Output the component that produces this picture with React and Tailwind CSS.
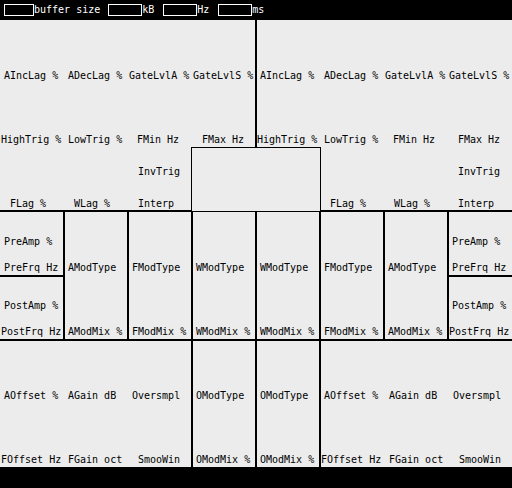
const MONO = "font-['DejaVu_Sans_Mono','Liberation_Mono',monospace] text-[10px]"

function Lbl({ children, className = '' }) {
  return <div className={`h-[11px] whitespace-pre leading-[11px] ${className}`}>{children}</div>
}

// a knob slot in the top grid: label sits at the bottom
function Knob({ label, pad, className = '' }) {
  return (
    <div className={`flex flex-col justify-end ${className}`}>
      <Lbl className={pad}>{label}</Lbl>
    </div>
  )
}

function Toggles({ className = '' }) {
  return (
    <div className={`flex flex-col justify-end border-b-2 border-black pb-[1px] ${className}`}>
      <Lbl className="mb-[21px] pl-[10px]">InvTrig</Lbl>
      <Lbl className="pl-[10px]">Interp</Lbl>
    </div>
  )
}

function ModCell({ type, mix, className = '' }) {
  return (
    <div className={`flex h-[128px] w-[64px] flex-col justify-end border-r border-b border-l border-black pb-[2px] ${className}`}>
      <Lbl className="mb-[53px] pl-[3px]">{type}</Lbl>
      <Lbl className="pl-[3px]">{mix}</Lbl>
    </div>
  )
}

function AmpStack({ side }) {
  const edge = side === 'left' ? 'border-r' : 'border-l'
  const last = side === 'left' ? 'pl-[1px]' : 'pl-0'
  const pad = side === 'left' ? 'pl-[4px]' : 'pl-[3px]'
  return (
    <div className="flex w-[64px] flex-col">
      <div className={`flex h-[64px] flex-col justify-end border-b border-black pb-[2px] ${edge}`}>
        <Lbl className={`mb-[15px] ${pad}`}>PreAmp %</Lbl>
        <Lbl className={pad}>PreFrq Hz</Lbl>
      </div>
      <div className={`flex h-[64px] flex-col justify-end border-t border-b border-black pb-[2px] ${edge}`}>
        <Lbl className={`mb-[15px] ${pad}`}>PostAmp %</Lbl>
        <Lbl className={last}>PostFrq Hz</Lbl>
      </div>
    </div>
  )
}

function OffsetGroup({ className = '', first = 'pl-[4px]', firstLow = 'pl-[1px]' }) {
  return (
    <div className={`flex h-[127px] w-[192px] border-t border-black ${className}`}>
      <div className="flex w-[64px] flex-col justify-end pb-[2px]">
        <Lbl className={`mb-[53px] ${first}`}>AOffset %</Lbl>
        <Lbl className={firstLow}>FOffset Hz</Lbl>
      </div>
      <div className="flex w-[64px] flex-col justify-end pb-[2px]">
        <Lbl className="mb-[53px] pl-[4px]">AGain dB</Lbl>
        <Lbl className="pl-[4px]">FGain oct</Lbl>
      </div>
      <div className="flex flex-1 flex-col justify-end pb-[2px]">
        <Lbl className="mb-[53px] pl-[4px]">Oversmpl</Lbl>
        <Lbl className="pl-[10px]">SmooWin</Lbl>
      </div>
    </div>
  )
}

function OModCell({ side }) {
  return (
    <div className="flex h-[127px] w-[64px] flex-col justify-end border-t border-r border-l border-black pb-[2px]">
      <Lbl className="mb-[53px] pl-[3px]">OModType</Lbl>
      <Lbl className="pl-[3px]">OModMix %</Lbl>
    </div>
  )
}

function Field({ className = '' }) {
  return <div className={`h-[12px] border border-white ${className}`} />
}

export default function App() {
  return (
    <div className={`flex h-[488px] w-[512px] flex-col bg-black text-black ${MONO}`}>
      {/* header */}
      <div className="flex h-[20px] items-start pt-[4px] text-white">
        <Field className="ml-[4px] w-[30px]" />
        <div className="mt-[-2px]">buffer size</div>
        <Field className="ml-[8px] w-[34px]" />
        <div className="mt-[-2px]">kB</div>
        <Field className="ml-[9px] w-[34px]" />
        <div className="mt-[-2px]">Hz</div>
        <Field className="ml-[9px] w-[34px]" />
        <div className="mt-[-2px]">ms</div>
      </div>

      <div className="flex flex-col bg-[#ececec]">
        {/* knobs */}
        <div className="grid h-[192px] grid-cols-[repeat(8,64px)] grid-rows-[repeat(3,64px)]">
          <Knob label="AIncLag %" pad="pl-[4px]" className="pb-[3px]" />
          <Knob label="ADecLag %" pad="pl-[4px]" className="pb-[3px]" />
          <Knob label="GateLvlA %" pad="pl-[1px]" className="pb-[3px]" />
          <Knob label="GateLvlS %" pad="pl-[1px]" className="border-r border-black pb-[3px]" />
          <Knob label="AIncLag %" pad="pl-[3px]" className="border-l border-black pb-[3px]" />
          <Knob label="ADecLag %" pad="pl-[4px]" className="pb-[3px]" />
          <Knob label="GateLvlA %" pad="pl-[1px]" className="pb-[3px]" />
          <Knob label="GateLvlS %" pad="pl-[1px]" className="pb-[3px]" />

          <Knob label="HighTrig %" pad="pl-[1px]" className="pb-[3px]" />
          <Knob label="LowTrig %" pad="pl-[4px]" className="pb-[3px]" />
          <Knob label="FMin Hz" pad="pl-[9px]" className="pb-[3px]" />
          <Knob label="FMax Hz" pad="pl-[10px]" className="border-r border-black pb-[3px]" />
          <Knob label="HighTrig %" pad="pl-0" className="border-l border-black pb-[3px]" />
          <Knob label="LowTrig %" pad="pl-[4px]" className="pb-[3px]" />
          <Knob label="FMin Hz" pad="pl-[9px]" className="pb-[3px]" />
          <Knob label="FMax Hz" pad="pl-[10px]" className="pb-[3px]" />

          <Knob label="FLag %" pad="pl-[10px]" className="border-b-2 border-black pb-[1px]" />
          <Knob label="WLag %" pad="pl-[10px]" className="border-b-2 border-black pb-[1px]" />
          <Toggles />
          <div className="col-span-2">
            <div className="-mt-px -ml-px h-[65px] w-[130px] border border-black" />
          </div>
          <Knob label="FLag %" pad="pl-[10px]" className="border-b-2 border-black pb-[1px]" />
          <Knob label="WLag %" pad="pl-[10px]" className="border-b-2 border-black pb-[1px]" />
          <Toggles />
        </div>

        {/* modulation */}
        <div className="flex h-[128px]">
          <AmpStack side="left" />
          <ModCell type="AModType" mix="AModMix %" />
          <ModCell type="FModType" mix="FModMix %" />
          <ModCell type="WModType" mix="WModMix %" />
          <ModCell type="WModType" mix="WModMix %" />
          <ModCell type="FModType" mix="FModMix %" />
          <ModCell type="AModType" mix="AModMix %" />
          <AmpStack side="right" />
        </div>

        {/* output */}
        <div className="flex h-[127px]">
          <OffsetGroup className="border-r" />
          <OModCell />
          <OModCell />
          <OffsetGroup className="border-l" first="pl-[3px]" firstLow="pl-0" />
        </div>
      </div>

      <div className="h-[21px] bg-black" />
    </div>
  )
}
